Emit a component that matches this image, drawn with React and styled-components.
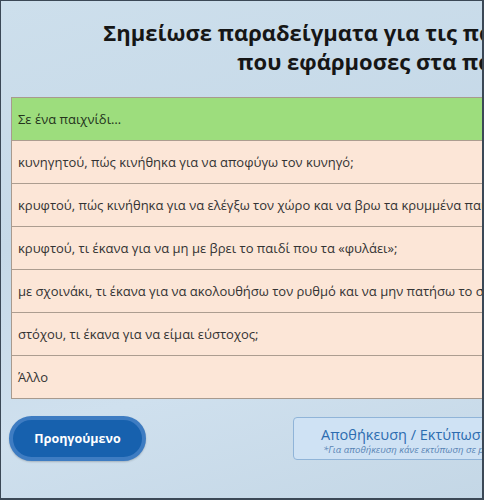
import React from "react";
import styled, { createGlobalStyle } from "styled-components";

const Global = createGlobalStyle`
  html, body { margin: 0; padding: 0; overflow: hidden; }
  body { width: 484px; height: 500px; font-family: "Open Sans", "Liberation Sans", sans-serif; }
`;

const Frame = styled.div`
  box-sizing: border-box;
  width: 484px;
  height: 500px;
  border: 1px solid #3b4856;
  border-right-width: 2px;
  border-bottom-width: 2px;
  background: linear-gradient(165deg, #cddfec 0%, #c6d9e8 40%, #cfe0ee 70%, #c4d7e6 100%);
  overflow: hidden;
`;

const Page = styled.div`
  width: 900px;
  padding: 17px 0 0 10px;
  display: flex;
  flex-direction: column;
`;

const Title = styled.h1`
  margin: 0;
  width: 795px;
  text-align: center;
  font-family: "Open Sans", sans-serif;
  font-weight: 700;
  font-size: 22px;
  line-height: 29px;
  color: #161616;
  white-space: nowrap;
`;

const Table = styled.div`
  margin-top: 21px;
  width: 760px;
  border: 1px solid #a89a8e;
  display: flex;
  flex-direction: column;
`;

const Row = styled.div`
  height: 42px;
  display: flex;
  align-items: center;
  padding-left: 6px;
  font-size: 13px;
  color: ${(p) => (p.$head ? "#24331c" : "#333")};
  background: ${(p) => (p.$head ? "#9ddd7d" : "#fce6d7")};
  border-top: ${(p) => (p.$first ? "none" : "1.5px solid #ac9d90")};
`;

const Footer = styled.div`
  margin-top: 17px;
  display: flex;
  align-items: center;
  gap: 147px;
`;

const PrevButton = styled.button`
  box-sizing: border-box;
  width: 137px;
  height: 45px;
  margin-left: -2px;
  border-radius: 23px;
  border: 4px solid #3e7cc2;
  background: #1761ae;
  color: #fff;
  font-family: "Open Sans", sans-serif;
  font-weight: 700;
  font-size: 12.5px;
  box-shadow: 0 1px 2px rgba(0,0,0,0.2);
`;

const SaveButton = styled.div`
  box-sizing: border-box;
  width: 300px;
  height: 43px;
  border: 1px solid #90b4d8;
  border-radius: 4px;
  background: #cfe2f4;
  display: flex;
  flex-direction: column;
  padding: 8px 0 0 27px;
`;

const SaveLabel = styled.span`
  font-size: 14.5px;
  color: #2c6cb0;
  line-height: 18px;
`;

const SaveNote = styled.span`
  font-size: 9.6px;
  font-style: italic;
  color: #5a85b5;
  line-height: 11px;
  padding-left: 2px;
  white-space: nowrap;
`;

const rows = [
  "κυνηγητού, πώς κινήθηκα για να αποφύγω τον κυνηγό;",
  "κρυφτού, πώς κινήθηκα για να ελέγξω τον χώρο και να βρω τα κρυμμένα παιδιά;",
  "κρυφτού, τι έκανα για να μη με βρει το παιδί που τα «φυλάει»;",
  "με σχοινάκι, τι έκανα για να ακολουθήσω τον ρυθμό και να μην πατήσω το σχοινί;",
  "στόχου, τι έκανα για να είμαι εύστοχος;",
  "Άλλο",
];

export default function App() {
  return (
    <>
      <Global />
      <Frame>
        <Page>
          <Title>
            Σημείωσε παραδείγματα για τις παρεμβάσεις/τεχνικές
            <br />
            που εφάρμοσες στα παιχνίδια:
          </Title>
          <Table>
            <Row $head $first>Σε ένα παιχνίδι…</Row>
            {rows.map((r) => (
              <Row key={r}>{r}</Row>
            ))}
          </Table>
          <Footer>
            <PrevButton>Προηγούμενο</PrevButton>
            <SaveButton>
              <SaveLabel>Αποθήκευση / Εκτύπωση</SaveLabel>
              <SaveNote>*Για αποθήκευση κάνε εκτύπωση σε pdf</SaveNote>
            </SaveButton>
          </Footer>
        </Page>
      </Frame>
    </>
  );
}
